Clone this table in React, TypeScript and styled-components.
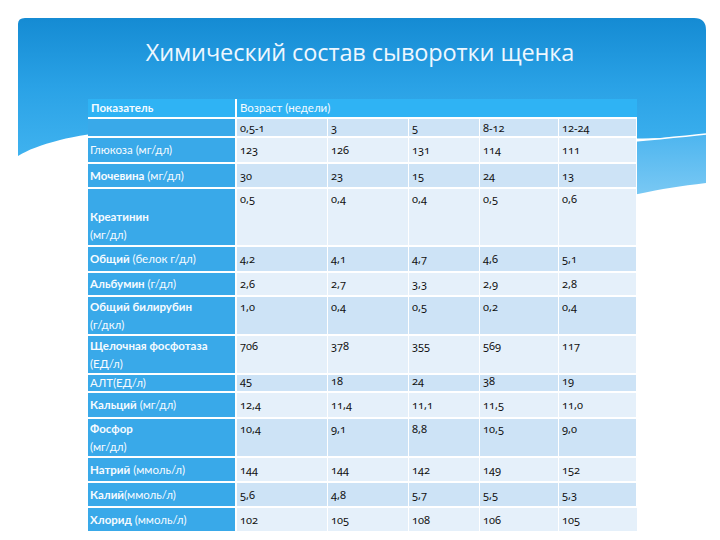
import React from "react";
import styled, { createGlobalStyle } from "styled-components";

const Global = createGlobalStyle`
  html, body { margin: 0; padding: 0; background: #ffffff; }
  body { font-family: "Lato", "Noto Sans", "DejaVu Sans", sans-serif; }
  * { box-sizing: border-box; }
`;

const Slide = styled.div`
  position: relative;
  width: 720px;
  height: 540px;
  overflow: hidden;
  background: #ffffff;
`;

const Backdrop = styled.svg`
  position: absolute;
  left: 0;
  top: 0;
  width: 720px;
  height: 540px;
  z-index: 0;
`;

const Content = styled.div`
  position: relative;
  z-index: 1;
  display: flex;
  flex-direction: column;
  padding-top: 36px;
`;

const Title = styled.h1`
  margin: 0;
  font-family: "Open Sans", "Noto Sans", sans-serif;
  font-weight: 400;
  font-size: 23.5px;
  line-height: 32px;
  color: #eef7ff;
  text-align: center;
  letter-spacing: -0.1px;
`;

const Grid = styled.div`
  margin: 31px 0 0 88px;
  width: 549px;
  display: grid;
  grid-template-columns: 149px 91px 81px 71px 79px 78px;
  grid-template-rows: 20px 19px 26px 25px 58px 26px 24px 39px 39px 18px 26px 39px 25px 25px 25px;
`;

type Align = "start" | "center" | "end";

const Cell = styled.div<{ $align?: Align }>`
  display: flex;
  flex-direction: column;
  justify-content: ${(p) =>
    p.$align === "end" ? "flex-end" : p.$align === "center" ? "center" : "flex-start"};
  padding: 1px 3px 1px 3px;
  border-bottom: 2px solid #ffffff;
  border-right: 1px solid #ffffff;
  font-size: 11px;
  line-height: 18px;
  white-space: nowrap;
`;

const HeadCell = styled(Cell)<{ $span?: number }>`
  grid-column: span ${(p) => p.$span ?? 1};
  background: #2fb3f4;
  color: #f4fbff;
  font-size: 11.5px;
  border-right-width: ${(p) => (p.$span ? "0" : "2px")};
  padding-top: 0;
  font-weight: ${(p) => (p.$span ? 400 : 700)};
`;

const LabelCell = styled(Cell)`
  background: #39a9e9;
  color: #f6fbff;
  font-size: 11.5px;
  border-right-width: 2px;
  padding-left: 2px;
  b { font-weight: 700; }
`;

const DataCell = styled(Cell)<{ $dark: boolean }>`
  background: ${(p) => (p.$dark ? "#cde3f6" : "#e5f0fa")};
  color: #111111;
  font-family: "Noto Sans", "Lato", sans-serif;
  font-feature-settings: "onum" 1;
  font-variant-numeric: oldstyle-nums;
  font-size: 11px;
  &:last-child { border-right: 0; }
`;

type Row = {
  name?: string;
  unit?: string;
  lines?: 1 | 2;
  bold?: boolean;
  values: string[];
  labelAlign?: Align;
  dataAlign?: Align;
};

const rows: Row[] = [
  { values: ["0,5-1", "3", "5", "8-12", "12-24"], dataAlign: "center" },
  { name: "Глюкоза", unit: " (мг/дл)", bold: false, values: ["123", "126", "131", "114", "111"], labelAlign: "center", dataAlign: "center" },
  { name: "Мочевина", unit: " (мг/дл)", bold: true, values: ["30", "23", "15", "24", "13"], labelAlign: "center", dataAlign: "center" },
  { name: "Креатинин", unit: "(мг/дл)", lines: 2, bold: true, values: ["0,5", "0,4", "0,4", "0,5", "0,6"], labelAlign: "end", dataAlign: "start" },
  { name: "Общий", unit: " (белок г/дл)", bold: true, values: ["4,2", "4,1", "4,7", "4,6", "5,1"], labelAlign: "center", dataAlign: "center" },
  { name: " Альбумин", unit: " (г/дл)", bold: true, values: ["2,6", "2,7", "3,3", "2,9", "2,8"], labelAlign: "center", dataAlign: "center" },
  { name: "Общий билирубин", unit: "(г/дкл)", lines: 2, bold: true, values: ["1,0", "0,4", "0,5", "0,2", "0,4"], labelAlign: "start", dataAlign: "start" },
  { name: "Щелочная фосфотаза", unit: "(ЕД/л)", lines: 2, bold: true, values: ["706", "378", "355", "569", "117"], labelAlign: "start", dataAlign: "start" },
  { name: "АЛТ(ЕД/л)", unit: "", bold: false, values: ["45", "18", "24", "38", "19"], labelAlign: "center", dataAlign: "end" },
  { name: "Кальций", unit: " (мг/дл)", bold: true, values: ["12,4", "11,4", "11,1", "11,5", "11,0"], labelAlign: "center", dataAlign: "center" },
  { name: "Фосфор", unit: "(мг/дл)", lines: 2, bold: true, values: ["10,4", "9,1", "8,8", "10,5", "9,0"], labelAlign: "start", dataAlign: "start" },
  { name: "Натрий", unit: " (ммоль/л)", bold: true, values: ["144", "144", "142", "149", "152"], labelAlign: "center", dataAlign: "center" },
  { name: "Калий", unit: "(ммоль/л)", bold: true, values: ["5,6", "4,8", "5,7", "5,5", "5,3"], labelAlign: "center", dataAlign: "center" },
  { name: "Хлорид", unit: " (ммоль/л)", bold: true, values: ["102", "105", "108", "106", "105"], labelAlign: "center", dataAlign: "center" },
];

function Label({ row }: { row: Row }) {
  if (!row.name) return <LabelCell />;
  const nm = row.bold ? <b>{row.name}</b> : <span>{row.name}</span>;
  if (row.lines === 2) {
    return (
      <LabelCell $align={row.labelAlign}>
        <span>{nm}</span>
        <span>{row.unit}</span>
      </LabelCell>
    );
  }
  return (
    <LabelCell $align={row.labelAlign}>
      <span>
        {nm}
        {row.unit}
      </span>
    </LabelCell>
  );
}

export default function App() {
  return (
    <>
      <Global />
      <Slide>
        <Backdrop viewBox="0 0 720 540">
          <defs>
            <linearGradient id="mainBlue" x1="0" y1="0" x2="0" y2="1">
              <stop offset="0" stopColor="#158bd3" />
              <stop offset="0.5" stopColor="#2aa2e6" />
              <stop offset="1" stopColor="#3fb2ef" />
            </linearGradient>
            <linearGradient id="lightBlue" x1="0" y1="0" x2="0" y2="1">
              <stop offset="0" stopColor="#4db5ef" />
              <stop offset="1" stopColor="#7dcaf4" />
            </linearGradient>
          </defs>
          <path
            d="M18,24 Q18,18 25,18 L694,18 Q706,18 706,30 L706,134 C600,150 420,118 240,124 C150,127 90,132 60,140 C40,145 28,150 18,156 Z"
            fill="url(#mainBlue)"
          />
          <path
            d="M360,172 C480,150 600,146 706,134 L706,183 C680,186 662,189 638,194 C560,206 450,198 360,172 Z"
            fill="url(#lightBlue)"
          />
          <path
            d="M360,172 C480,150 600,146 706,134"
            fill="none"
            stroke="#ffffff"
            strokeWidth="1.5"
          />
        </Backdrop>
        <Content>
          <Title>Химический состав сыворотки щенка</Title>
          <Grid>
            <HeadCell>Показатель</HeadCell>
            <HeadCell $span={5}>Возраст (недели)</HeadCell>
            {rows.map((row, i) => (
              <React.Fragment key={i}>
                <Label row={row} />
                {row.values.map((v, j) => (
                  <DataCell key={j} $dark={i % 2 === 0} $align={row.dataAlign}>
                    {v}
                  </DataCell>
                ))}
              </React.Fragment>
            ))}
          </Grid>
        </Content>
      </Slide>
    </>
  );
}
